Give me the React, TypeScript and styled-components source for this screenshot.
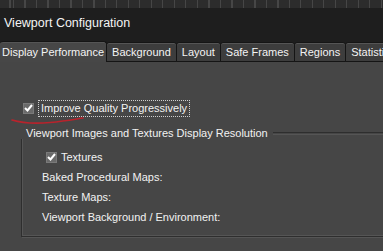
import React from 'react';
import styled, { createGlobalStyle } from 'styled-components';

const GlobalStyle = createGlobalStyle`
  html, body {
    margin: 0;
    padding: 0;
    background: #464646;
  }
`;

const Window = styled.div`
  width: 383px;
  height: 251px;
  overflow: hidden;
  background: #464646;
  font-family: 'Liberation Sans', Tahoma, sans-serif;
  font-size: 11px;
  color: #f2f2f2;
  display: flex;
  flex-direction: column;
`;

const Ruler = styled.div`
  height: 8px;
  flex-shrink: 0;
  background-color: #2c2c2c;
  background-image: repeating-linear-gradient(
    90deg,
    #464646 0 1px,
    transparent 1px 11.5px
  );
  background-position: 13px 0;
`;

const TitleBar = styled.div`
  height: 30px;
  flex-shrink: 0;
  background: #1e1e1e;
  display: flex;
  align-items: center;
  padding-left: 4px;
  font-size: 12.5px;
  color: #f4f4f4;
`;

const TabStrip = styled.div`
  height: 24px;
  flex-shrink: 0;
  display: flex;
  align-items: flex-end;
  background: #1e1e1e;
`;

const Tab = styled.div<{ $active?: boolean }>`
  height: ${(p) => (p.$active ? '21px' : '20px')};
  box-sizing: border-box;
  display: flex;
  align-items: center;
  padding: 0 ${(p) => (p.$active ? '2px' : '5px')};
  margin-left: ${(p) => (p.$active ? '0' : '-1px')};
  background: ${(p) => (p.$active ? '#474747' : '#3d3d3d')};
  border: 1px solid #151515;
  border-bottom: ${(p) => (p.$active ? 'none' : '1px solid #151515')};
  border-left: ${(p) => (p.$active ? 'none' : '1px solid #151515')};
  border-radius: 3px 3px 0 0;
  box-shadow: inset 0 1px 0 #555;
  white-space: nowrap;
  flex-shrink: 0;
  color: #f4f4f4;
`;

const Body = styled.div`
  flex: 1;
  position: relative;
  padding: 36px 0 0 22px;
`;

const CheckRow = styled.div<{ $indent?: number }>`
  display: flex;
  align-items: center;
  gap: 4px;
  height: 20px;
  margin-left: ${(p) => p.$indent ?? 0}px;
`;

const Box = styled.span`
  width: 11px;
  height: 11px;
  box-sizing: border-box;
  background: #6a6a6a;
  border: 1px solid #7a7a7a;
  display: inline-flex;
  align-items: center;
  justify-content: center;
`;

const Focus = styled.span`
  border: 1px dotted #cfcfcf;
  padding: 1px 2px;
  line-height: 13px;
`;

const Group = styled.div`
  margin-left: -1px;
  margin-top: 21px;
  position: relative;
  height: 97px;
  border-left: 1px solid #2e2e2e;
  border-bottom: 1px solid #2e2e2e;
  box-shadow: inset 1px -1px 0 #555, 1px 1px 0 #555;
`;

const Legend = styled.div`
  position: absolute;
  top: -12px;
  left: 4px;
  right: 0;
  display: flex;
  align-items: center;
  gap: 5px;
  white-space: nowrap;
`;

const LegendLine = styled.span`
  flex: 1;
  height: 1px;
  border-top: 1px solid #2e2e2e;
  border-bottom: 1px solid #555;
`;

const GroupBody = styled.div`
  padding: 8px 0 0 20px;
  display: flex;
  flex-direction: column;
`;

const Field = styled.div`
  height: 20px;
  display: flex;
  align-items: center;
`;

const Scribble = styled.svg`
  position: absolute;
  left: 10px;
  top: 54px;
  pointer-events: none;
`;

const Check = () => (
  <svg width="9" height="8" viewBox="0 0 9 8">
    <path d="M1 4 L3.5 6.5 L8 1" stroke="#ffffff" strokeWidth="2" fill="none" />
  </svg>
);

const tabs = ['Background', 'Layout', 'Safe Frames', 'Regions', 'Statistics'];

export default function App() {
  return (
    <Window>
      <GlobalStyle />
      <Ruler />
      <TitleBar>Viewport Configuration</TitleBar>
      <TabStrip>
        <Tab $active>Display Performance</Tab>
        {tabs.map((t) => (
          <Tab key={t}>{t}</Tab>
        ))}
      </TabStrip>
      <Body>
        <CheckRow $indent={1}>
          <Box>
            <Check />
          </Box>
          <Focus>Improve Quality Progressively</Focus>
        </CheckRow>
        <Scribble width="76" height="10" viewBox="0 0 76 10">
          <path
            d="M2 4 C 12 7, 24 8, 40 6.5 S 66 3, 73 2"
            stroke="#b8232c"
            strokeWidth="1.6"
            fill="none"
            strokeLinecap="round"
          />
        </Scribble>
        <Group>
          <Legend>
            <span>Viewport Images and Textures Display Resolution</span>
            <LegendLine />
          </Legend>
          <GroupBody>
            <CheckRow $indent={4}>
              <Box>
                <Check />
              </Box>
              <span>Textures</span>
            </CheckRow>
            <Field>Baked Procedural Maps:</Field>
            <Field>Texture Maps:</Field>
            <Field>Viewport Background / Environment:</Field>
          </GroupBody>
        </Group>
      </Body>
    </Window>
  );
}
